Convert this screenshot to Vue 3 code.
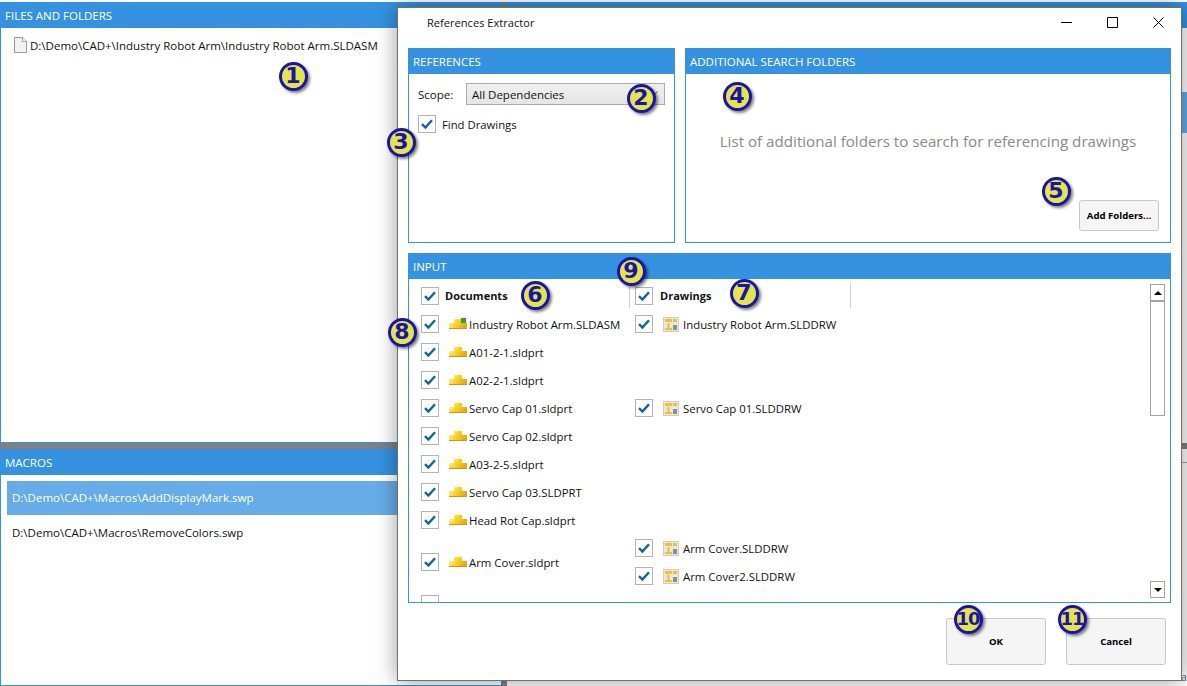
<template>
  <div class="app">
    <!-- shared icons -->
    <svg class="sprite" width="0" height="0">
      <defs>
        <linearGradient id="gold" x1="0" y1="0" x2="1" y2="0.35">
          <stop offset="0" stop-color="#fff3c0" />
          <stop offset="0.45" stop-color="#ffd92e" />
          <stop offset="1" stop-color="#e9a912" />
        </linearGradient>
        <symbol id="tick" viewBox="0 0 18 18">
          <path d="M4 9.2l3.4 3.4L14 5.2" fill="none" stroke="#0f62a6" stroke-width="2.4" />
        </symbol>
        <symbol id="part" viewBox="0 0 18 12">
          <path d="M5 1h8v4h5v6H0V5h5z" fill="url(#gold)" />
          <path d="M0 10h18v1H0z" fill="#c99a2a" />
        </symbol>
        <symbol id="asm" viewBox="0 0 18 12">
          <path d="M5 1h8v4h5v6H0V5h5z" fill="url(#gold)" />
          <path d="M0 10h18v1H0z" fill="#c99a2a" />
          <path d="M12 0h5v5h-5z" fill="#3f9b35" />
        </symbol>
        <symbol id="drw" viewBox="0 0 16 15">
          <path d="M0 0h16v15H0z" fill="#cfcdc8" />
          <path d="M1 1h14v13H1z" fill="#e9e7e2" />
          <path d="M2 2h7v3H2zM10 2h4v3h-4z" fill="#eec22c" />
          <path d="M2 11h7v2H2zM4.500 6h2v5h-2z" fill="#eec22c" />
          <path d="M10 8h4v5h-4z" fill="#8e8e8a" />
        </symbol>
      </defs>
    </svg>

    <!-- main window behind the dialog -->
    <div class="left-col">
      <section class="panel files">
        <header class="panel-head">FILES AND FOLDERS</header>
        <div class="file-row">
          <svg class="file-icon" width="13" height="16" viewBox="0 0 13 16">
            <path d="M.5.5h8l4 4v11H.5z" fill="#f1f1f1" stroke="#9a9a9a" />
            <path d="M8.500.5v4h4" fill="#fff" stroke="#9a9a9a" />
          </svg>
          <span>D:\Demo\CAD+\Industry Robot Arm\Industry Robot Arm.SLDASM</span>
        </div>
      </section>
      <div class="split-h"></div>
      <section class="panel macros">
        <header class="panel-head">MACROS</header>
        <div class="macro-list">
          <div
            v-for="(m, i) in macros"
            :key="m"
            class="macro-row"
            :class="{ selected: i === 0 }"
          >{{ m }}</div>
        </div>
      </section>
    </div>
    <div class="split-v"></div>
    <div class="right-col">
      <header class="panel-head"></header>
      <div class="right-sel"></div>
      <div class="right-fill"></div>
      <div class="split-h"></div>
      <div class="right-line"></div>
      <div class="right-tail">a</div>
    </div>

    <!-- dialog -->
    <div class="dialog">
      <div class="titlebar">
        <span class="title">References Extractor</span>
        <div class="win-btns">
          <span class="win-btn">
            <svg width="11" height="11" viewBox="0 0 11 11"><path d="M0 5.500h11" stroke="#000" /></svg>
          </span>
          <span class="win-btn">
            <svg width="11" height="11" viewBox="0 0 11 11"><path d="M.5.500h10v10H.5z" fill="none" stroke="#000" /></svg>
          </span>
          <span class="win-btn">
            <svg width="11" height="11" viewBox="0 0 11 11"><path d="M.5.500l10 10M10.500.500l-10 10" stroke="#000" /></svg>
          </span>
        </div>
      </div>

      <div class="top-row">
        <section class="panel refs">
          <header class="panel-head">REFERENCES</header>
          <div class="refs-body">
            <div class="scope">
              <span class="scope-label">Scope:</span>
              <div class="combo">
                <span>All Dependencies</span>
                <svg width="9" height="6" viewBox="0 0 9 6"><path d="M.5.500l4 4 4-4" fill="none" stroke="#555" /></svg>
              </div>
            </div>
            <label class="find">
              <span class="check"><svg width="18" height="18"><use href="#tick" /></svg></span>
              <span>Find Drawings</span>
            </label>
          </div>
        </section>
        <section class="panel extra">
          <header class="panel-head">ADDITIONAL SEARCH FOLDERS</header>
          <div class="extra-body">
            <p class="hint">List of additional folders to search for referencing drawings</p>
            <button class="btn add">Add Folders...</button>
          </div>
        </section>
      </div>

      <section class="panel input">
        <header class="panel-head">INPUT</header>
        <div class="input-body">
          <div class="list">
            <div class="list-head">
              <div class="col-doc head-cell">
                <span class="check"><svg width="18" height="18"><use href="#tick" /></svg></span>
                <b>Documents</b>
              </div>
              <div class="col-drw head-cell sep">
                <span class="check"><svg width="18" height="18"><use href="#tick" /></svg></span>
                <b>Drawings</b>
              </div>
            </div>
            <div v-for="doc in docs" :key="doc.name" class="doc-group">
              <div class="col-doc row">
                <span class="check"><svg v-if="doc.name" width="18" height="18"><use href="#tick" /></svg></span>
                <template v-if="doc.name">
                  <svg class="doc-icon" width="18" height="12"><use :href="doc.icon" /></svg>
                  <span>{{ doc.name }}</span>
                </template>
              </div>
              <div class="col-drw">
                <div v-for="d in doc.drawings" :key="d" class="row drw-row">
                  <span class="check"><svg width="18" height="18"><use href="#tick" /></svg></span>
                  <svg class="drw-icon" width="16" height="15"><use href="#drw" /></svg>
                  <span>{{ d }}</span>
                </div>
              </div>
            </div>
          </div>
          <div class="scrollbar">
            <div class="sb-btn"><i class="arrow up"></i></div>
            <div class="sb-thumb"></div>
            <div class="sb-gap"></div>
            <div class="sb-btn"><i class="arrow down"></i></div>
          </div>
        </div>
      </section>

      <footer class="footer">
        <button class="btn big">OK</button>
        <button class="btn big">Cancel</button>
      </footer>
    </div>

    <!-- callout numbers -->
    <span
      v-for="b in badges"
      :key="b.n"
      class="badge"
      :style="{ left: b.x - 14.5 + 'px', top: b.y - 14.5 + 'px' }"
    ><span :class="{ wide: b.n > 9 }">{{ b.n }}</span></span>
  </div>
</template>

<script setup>
const macros = [
  'D:\\Demo\\CAD+\\Macros\\AddDisplayMark.swp',
  'D:\\Demo\\CAD+\\Macros\\RemoveColors.swp'
]

const docs = [
  { name: 'Industry Robot Arm.SLDASM', icon: '#asm', drawings: ['Industry Robot Arm.SLDDRW'] },
  { name: 'A01-2-1.sldprt', icon: '#part', drawings: [] },
  { name: 'A02-2-1.sldprt', icon: '#part', drawings: [] },
  { name: 'Servo Cap 01.sldprt', icon: '#part', drawings: ['Servo Cap 01.SLDDRW'] },
  { name: 'Servo Cap 02.sldprt', icon: '#part', drawings: [] },
  { name: 'A03-2-5.sldprt', icon: '#part', drawings: [] },
  { name: 'Servo Cap 03.SLDPRT', icon: '#part', drawings: [] },
  { name: 'Head Rot Cap.sldprt', icon: '#part', drawings: [] },
  { name: 'Arm Cover.sldprt', icon: '#part', drawings: ['Arm Cover.SLDDRW', 'Arm Cover2.SLDDRW'] },
  { name: '', icon: '', drawings: [] }
]

const badges = [
  { n: 1, x: 293, y: 76 },
  { n: 2, x: 641, y: 98 },
  { n: 3, x: 401, y: 142 },
  { n: 4, x: 737, y: 96 },
  { n: 5, x: 1056, y: 191 },
  { n: 6, x: 535, y: 295 },
  { n: 7, x: 744, y: 293 },
  { n: 8, x: 402, y: 332 },
  { n: 9, x: 631, y: 271 },
  { n: 10, x: 968, y: 619 },
  { n: 11, x: 1072, y: 619 }
]
</script>

<style>
html,
body {
  margin: 0;
  overflow: hidden;
  background: #fff;
}
</style>

<style scoped>
.app {
  position: relative;
  width: 1187px;
  height: 686px;
  display: flex;
  padding-top: 2px;
  box-sizing: border-box;
  overflow: hidden;
  background: #fff;
  color: #111;
  font-family: "Open Sans", "Liberation Sans", sans-serif;
  font-size: 11.5px;
}

.sprite {
  position: absolute;
}

.left-col {
  width: 502px;
  display: flex;
  flex-direction: column;
  flex: none;
}

.panel {
  display: flex;
  flex-direction: column;
  box-sizing: border-box;
  border: 1px solid #3492e0;
  border-top: none;
  background: #fff;
}

.panel-head {
  height: 26px;
  flex: none;
  margin: 0 -1px;
  padding: 1px 0 0 5px;
  box-sizing: border-box;
  line-height: 25px;
  background: #3492e0;
  color: #fff;
  font-size: 11.5px;
}

.files {
  height: 441px;
}

.macros {
  flex: 1;
}

.split-h {
  height: 6px;
  flex: none;
  background: #808080;
}

.split-v {
  width: 5px;
  flex: none;
  background: #808080;
}

.file-row {
  display: flex;
  align-items: center;
  gap: 3px;
  padding: 9px 0 0 13px;
}

.macro-list {
  padding: 6px 0 0 6px;
}

.macro-row {
  height: 34px;
  line-height: 34px;
  padding-left: 5px;
}

.macro-row + .macro-row {
  line-height: 36px;
}

.macro-row.selected {
  background: #66ace8;
  color: #fff;
}

.right-col {
  flex: 1;
  display: flex;
  flex-direction: column;
}

.right-sel {
  height: 41px;
  margin-top: 64px;
  flex: none;
  background: #66ace8;
}

.right-fill {
  height: 310px;
  flex: none;
}

.right-line {
  height: 1px;
  margin-top: 13px;
  flex: none;
  background: #a0a0a0;
}

.right-tail {
  margin-top: auto;
  padding: 0 0 2px 674px;
  font-size: 10.5px;
  color: #555;
}

.dialog {
  position: absolute;
  left: 397px;
  top: 7px;
  width: 785px;
  height: 674px;
  box-sizing: border-box;
  border: 1px solid #707070;
  background: #fff;
  box-shadow: 0 0 20px rgba(0, 0, 0, 0.4);
  display: flex;
  flex-direction: column;
}

.titlebar {
  height: 28px;
  margin-bottom: 12px;
  flex: none;
  display: flex;
  align-items: center;
  justify-content: space-between;
  padding-left: 29px;
}

.title {
  font-size: 11.1px;
}

.win-btns {
  display: flex;
}

.win-btn {
  width: 46px;
  height: 28px;
  display: flex;
  align-items: center;
  justify-content: center;
}

.win-btn svg {
  display: block;
}

.top-row {
  display: flex;
  gap: 10px;
  height: 195px;
  margin: 0 10px;
  flex: none;
}

.refs {
  width: 267px;
  flex: none;
}

.extra {
  flex: 1;
}

.refs-body {
  padding: 9px 9px 0;
}

.scope {
  display: flex;
  align-items: center;
  height: 22px;
}

.scope-label {
  width: 48px;
  flex: none;
}

.combo {
  flex: 1;
  height: 22px;
  box-sizing: border-box;
  display: flex;
  align-items: center;
  justify-content: space-between;
  padding: 0 6px 0 5px;
  border: 1px solid #acacac;
  background: linear-gradient(#f0f0f0, #e5e5e5);
}

.find {
  display: flex;
  align-items: center;
  gap: 6px;
  margin-top: 10px;
  font-size: 11.3px;
}

.check {
  width: 18px;
  height: 18px;
  flex: none;
  box-sizing: border-box;
  position: relative;
  display: block;
  border: 1px solid #b3b3b3;
  background: #fff;
}

.check svg {
  position: absolute;
  left: -1px;
  top: -1px;
}

.extra-body {
  flex: 1;
  display: flex;
  flex-direction: column;
  align-items: center;
  padding-top: 56px;
}

.hint {
  margin: 0;
  font-size: 15.15px;
  line-height: 22px;
  color: #8a8a8a;
}

.btn {
  box-sizing: border-box;
  border: 1px solid #c8c8c8;
  border-radius: 3px;
  background: #f5f5f5;
  color: #000;
  font-family: inherit;
  font-weight: 700;
  font-size: 9.6px;
  padding: 0;
}

.add {
  align-self: flex-end;
  width: 80px;
  height: 31px;
  margin: 48px 11px 0 0;
}

.input {
  height: 350px;
  margin: 10px 10px 0;
  flex: none;
}

.input-body {
  flex: 1;
  min-height: 0;
  display: flex;
  padding: 4px 5px 4px 12px;
  overflow: hidden;
}

.list {
  flex: 1;
  min-width: 0;
  height: 328px;
  margin-bottom: -10px;
  overflow: hidden;
  font-size: 11.4px;
}

.list-head {
  display: flex;
  height: 25px;
  margin-bottom: 2px;
}

.list-head b {
  font-size: 11px;
}

.col-doc {
  width: 208px;
  flex: none;
}

.col-drw {
  width: 222px;
  flex: none;
}

.head-cell {
  display: flex;
  align-items: center;
  gap: 6px;
}

.head-cell.sep {
  box-sizing: border-box;
  border-left: 1px solid #d0d0d0;
  border-right: 1px solid #d0d0d0;
  padding-left: 5px;
  gap: 7px;
}

.doc-group {
  display: flex;
  align-items: center;
}

.row {
  height: 28px;
  display: flex;
  align-items: center;
}

.drw-row {
  padding-left: 6px;
}

.doc-icon {
  margin: 0 2px 0 10px;
  flex: none;
}

.drw-icon {
  margin: 0 4px 0 10px;
  flex: none;
}

.scrollbar {
  width: 15px;
  flex: none;
  display: flex;
  flex-direction: column;
  margin: 1px 0 0 0;
}

.sb-btn {
  height: 17px;
  flex: none;
  box-sizing: border-box;
  border: 1px solid #a9a498;
  display: flex;
  align-items: center;
  justify-content: center;
}

.sb-thumb {
  height: 115px;
  flex: none;
  box-sizing: border-box;
  border: 1px solid #a9a498;
}

.sb-gap {
  flex: 1;
}

.arrow {
  width: 0;
  height: 0;
  border-left: 4px solid transparent;
  border-right: 4px solid transparent;
}

.arrow.up {
  border-bottom: 4px solid #000;
}

.arrow.down {
  border-top: 4px solid #000;
}

.footer {
  display: flex;
  justify-content: flex-end;
  gap: 20px;
  padding: 15px 15px 0 0;
}

.big {
  width: 100px;
  height: 47px;
}

.badge {
  position: absolute;
  width: 29px;
  height: 29px;
  box-sizing: border-box;
  border: 3px solid #1a14a8;
  border-radius: 50%;
  background: #e4e44c;
  box-shadow: 2px 2px 3px rgba(0, 0, 0, 0.5);
  color: #1a14a8;
  display: flex;
  align-items: center;
  justify-content: center;
  font-family: "DejaVu Sans", sans-serif;
  font-weight: 700;
  font-size: 22px;
  line-height: 1;
}

.badge .wide {
  letter-spacing: -1px;
  font-size: 18px;
}
</style>
